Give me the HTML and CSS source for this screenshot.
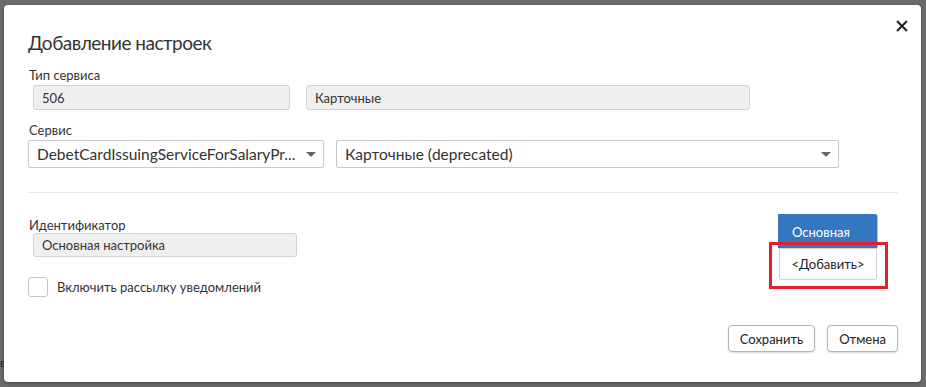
FILE: index.html
```html
<!DOCTYPE html>
<html>
<head>
    <meta charset="utf-8">
    <title>Добавление настроек</title>
    <link rel="stylesheet" href="styles.css">
</head>
<body>
    <span class="backdrop-text">в</span>
    <div class="dialog">
        <button class="close" aria-label="Закрыть">
            <svg width="14" height="14" viewBox="0 0 14 14"><path d="M2 2L12 12M12 2L2 12" stroke="#222" stroke-width="2"/></svg>
        </button>

        <h1>Добавление настроек</h1>

        <div class="label">Тип сервиса</div>
        <div class="row row-type">
            <div class="field readonly code">506</div>
            <div class="field readonly name">Карточные</div>
        </div>

        <div class="label">Сервис</div>
        <div class="row row-service">
            <div class="select service">
                <span>DebetCardIssuingServiceForSalaryPr...</span>
                <i class="caret"></i>
            </div>
            <div class="select kind">
                <span>Карточные (deprecated)</span>
                <i class="caret"></i>
            </div>
        </div>

        <hr>

        <div class="settings">
            <div class="settings-left">
                <div class="label">Идентификатор</div>
                <div class="field readonly ident">Основная настройка</div>
                <label class="check">
                    <span class="box"></span>
                    Включить рассылку уведомлений
                </label>
            </div>
            <div class="tabs">
                <div class="tab active">Основная</div>
                <div class="tab add">&lt;Добавить&gt;</div>
                <div class="highlight"></div>
            </div>
        </div>

        <div class="footer">
            <button class="btn">Сохранить</button>
            <button class="btn">Отмена</button>
        </div>
    </div>
</body>
</html>
```

FILE: styles.css
```css
html, body {
    margin: 0;
    padding: 0;
}

body {
    background-color: #6b6b6b;
    font-family: Lato, "Noto Sans", sans-serif;
    color: #333;
    height: 387px;
    overflow: hidden;
    position: relative;
}

.backdrop-text {
    position: absolute;
    left: 0;
    top: 355px;
    font-size: 12px;
    color: #222;
}

.dialog {
    position: relative;
    margin: 5px 5px 5px 4px;
    width: 917px;
    height: 377px;
    box-sizing: border-box;
    background-color: #fff;
    border-radius: 4px;
    padding: 26px 23px 30px 24px;
    display: flex;
    flex-direction: column;
    box-shadow: 0 1px 3px rgba(0,0,0,0.4);
}

.close {
    position: absolute;
    top: 14px;
    right: 12px;
    border: 0;
    background: none;
    padding: 0;
    width: 14px;
    height: 14px;
    cursor: pointer;
}

.close svg {
    display: block;
}

h1 {
    margin: 0;
    font-size: 19px;
    letter-spacing: -0.5px;
    line-height: 24px;
    font-weight: normal;
    color: #333;
}

.label {
    font-size: 13px;
    line-height: 16px;
    color: #333;
    margin-left: 1px;
}

h1 + .label {
    margin-top: 12px;
}

.row {
    display: flex;
    margin-top: 2px;
}

.field {
    box-sizing: border-box;
    font-size: 13px;
    line-height: 24px;
    height: 25px;
    padding: 0 8px;
    border: 1px solid #d2d2d2;
    border-radius: 3px;
    white-space: nowrap;
}

.readonly {
    background-color: #efefef;
}

.row-type {
    margin-left: 5px;
}

.code {
    width: 257px;
}

.name {
    width: 444px;
    margin-left: 16px;
}

.row-type + .label {
    margin-top: 12px;
}

.select {
    box-sizing: border-box;
    height: 28px;
    border: 1px solid #c8c8c8;
    border-radius: 2px;
    background-color: #fff;
    display: flex;
    align-items: center;
    justify-content: space-between;
    padding: 0 7px 0 8px;
    font-size: 15.5px;
    color: #333;
}

.service {
    width: 296px;
}

.kind {
    width: 503px;
    margin-left: 12px;
}

.caret {
    width: 0;
    height: 0;
    border-left: 5px solid transparent;
    border-right: 5px solid transparent;
    border-top: 5px solid #666;
}

hr {
    border: 0;
    border-top: 1px solid #e6e6e6;
    margin: 24px 0 0;
    width: 870px;
}

.settings {
    display: flex;
    justify-content: space-between;
    align-items: flex-start;
    margin-top: 21px;
    padding-right: 20px;
}

.settings .label {
    margin-top: 3px;
}

.ident {
    width: 264px;
    height: 24px;
    line-height: 23px;
    margin: 0 0 0 5px;
}

.check {
    display: flex;
    align-items: center;
    margin-top: 20px;
    font-size: 13px;
    color: #333;
}

.box {
    width: 20px;
    height: 20px;
    box-sizing: border-box;
    border: 1px solid #c4c4c4;
    border-radius: 3px;
    margin-right: 9px;
}

.tabs {
    position: relative;
    width: 100px;
}

.tab {
    box-sizing: border-box;
    font-size: 13px;
}

.active {
    height: 34px;
    line-height: 36px;
    padding-left: 14px;
    background-color: #3476bf;
    color: #fff;
    border-radius: 0 3px 0 0;
    border-right: 1px solid #a9c5e6;
}

.add {
    height: 32px;
    line-height: 30px;
    margin-left: 1px;
    width: 98px;
    text-align: center;
    border: 1px solid #d0d0d0;
    border-radius: 0 0 2px 2px;
    background-color: #fff;
    color: #222;
}

.highlight {
    position: absolute;
    left: -9px;
    top: 28px;
    width: 119px;
    height: 47px;
    box-sizing: border-box;
    border: 3px solid #e41e2b;
}

.footer {
    margin-top: auto;
    display: flex;
    justify-content: flex-end;
    gap: 12px;
}

.btn {
    font-family: inherit;
    font-size: 13px;
    color: #222;
    height: 27px;
    padding: 0 11px;
    background-color: #fff;
    border: 1px solid #b4b4b4;
    border-radius: 4px;
    box-shadow: 0 1px 2px rgba(0,0,0,0.15);
}
```
